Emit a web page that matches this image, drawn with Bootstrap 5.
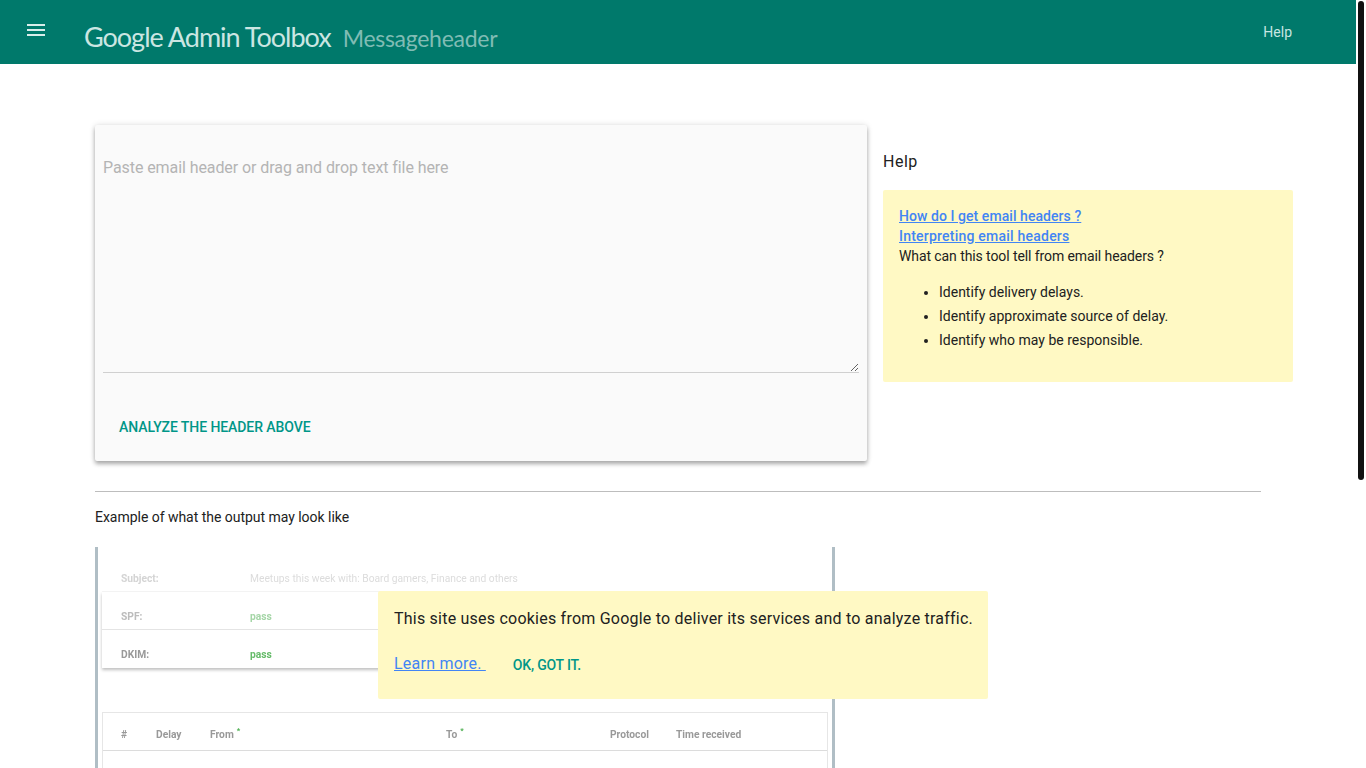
<!DOCTYPE html>
<html lang="en">
<head>
<meta charset="utf-8">
<title>Messageheader</title>
<link rel="stylesheet" href="https://cdn.jsdelivr.net/npm/bootstrap@5.3.0/dist/css/bootstrap.min.css">
<style>
body{font-family:Roboto,"Liberation Sans",sans-serif;font-size:14px;line-height:20px;color:#212121;background:#fff;width:1356px;overflow-x:hidden}
.scroll-thumb{position:fixed;left:1358px;top:1px;width:6px;height:479px;background:#111;border-radius:3px}
.top-bar{height:64px;background:#00796b;color:#b2dfdb}
.menu-btn{width:18px;margin-left:27px;margin-top:24px;align-self:flex-start}
.brand-main{font-family:Lato,sans-serif;font-weight:400;font-size:27px;line-height:32px;letter-spacing:-1px;color:#cbe6e2;margin-left:39px;margin-top:21px}
.brand-sub{font-family:Lato,sans-serif;font-weight:400;font-size:23px;line-height:32px;letter-spacing:-.28px;color:#80bcb4;margin-left:12px;margin-top:22px}
.top-help{color:#c8e6e2;margin-right:64px;margin-top:22px}
.page-wrap{padding:61px 63px 0 95px}
.paste-card{width:772px;height:336px;background:#fafafa;box-shadow:0 3px 4px rgba(0,0,0,.3),0 0 6px rgba(0,0,0,.12);padding:0 8px;border-radius:2px}
.paste-area{width:100%;height:248px;background:transparent;border:0;border-bottom:1px solid #d0d0d0;padding:32px 0 0;font-size:16px;line-height:21px;outline:0;display:block;font-family:inherit;letter-spacing:-.08px}
.paste-area::placeholder{color:#b4b4b4;opacity:1}
.analyze{color:#009688;font-weight:500;text-transform:uppercase;font-size:14px;margin-top:44px;margin-left:16px;line-height:20px;border:0;background:none;display:block;padding:0;letter-spacing:-.08px}
.help-col{width:410px}
.help-title{font-size:16px;letter-spacing:.5px;line-height:24px;margin-top:25px;margin-bottom:16px}
.tip-box{background:#fff9c4;border-radius:2px;height:192px;padding:16px;letter-spacing:-.09px}
.tip-box a{color:#4285f4;font-weight:500;display:block;letter-spacing:.06px}
.tip-box a+a{letter-spacing:.22px}
.tip-box ul{margin:14px 0 0;padding-left:40px;letter-spacing:0}
.tip-box li{line-height:24px}
.rule{border:0;border-top:1px solid #bdbdbd;opacity:1;margin:30px 32px 0 0}
.example-label{margin:15px 0 20px;letter-spacing:-.03px}
.shot{width:740px;height:660px;border-left:3px solid #b0bec5;border-right:3px solid #b0bec5;padding:7px 4px 0;font-size:10.25px;font-weight:700;color:#757575}
.shot-inner{filter:blur(.4px)}
.info-row{height:38px;padding-left:19px;padding-top:12px;border-bottom:1px solid #e4e4e4}
.info-key{width:129px}
.info-stack{box-shadow:0 2px 3px rgba(0,0,0,.25)}
.fade-a{color:#dcdcdc;font-weight:400;border-bottom-color:#f6f6f6}
.fade-a .info-key{font-weight:700;color:#d4d4d4}
.fade-b{color:#bcbcbc}
.fade-b .pass{color:#a5d6a7}
.fade-c{color:#999;border-bottom:0}
.fade-c .pass{color:#66bb6a}
.flow-table{margin-top:44px;border:1px solid #e6e6e6;height:400px}
.flow-head{height:38px;padding-top:6px;border-bottom:1px solid #dcdcdc;color:#999}
.c1{width:35px;margin-left:18px}.c2{width:54px}.c3{width:236px}.c4{width:164px}.c5{width:66px}
.flow-head sup{color:#4caf50;margin-left:3px;top:-.6em}
.cookie-note{position:fixed;left:378px;top:591px;width:610px;height:108px;background:#fff9c4;border-radius:2px;padding:16px;font-size:16px;line-height:24px;color:#212121;letter-spacing:.225px;white-space:nowrap}
.cookie-note a{color:#4285f4}
.cookie-row{margin-top:21px}
.cookie-ok{color:#009688;font-weight:500;font-size:14px;text-transform:uppercase;margin-left:27px;letter-spacing:-.2px;vertical-align:-1px}
</style>
</head>
<body>
<header class="top-bar d-flex">
  <svg class="menu-btn" viewBox="0 0 18 12" height="12" aria-hidden="true"><path fill="#d9eeeb" d="M0 0h18v2H0zM0 5h18v2H0zM0 10h18v2H0z"/></svg>
  <div class="brand-main">Google Admin Toolbox</div>
  <div class="brand-sub">Messageheader</div>
  <div class="top-help ms-auto">Help</div>
</header>
<main class="page-wrap">
  <div class="d-flex gap-3">
    <div class="paste-card">
      <textarea class="paste-area" placeholder="Paste email header or drag and drop text file here"></textarea>
      <button class="analyze" type="button">Analyze the header above</button>
    </div>
    <div class="help-col">
      <div class="help-title">Help</div>
      <div class="tip-box">
        <a href="#">How do I get email headers ?</a>
        <a href="#">Interpreting email headers</a>
        What can this tool tell from email headers ?
        <ul>
          <li>Identify delivery delays.</li>
          <li>Identify approximate source of delay.</li>
          <li>Identify who may be responsible.</li>
        </ul>
      </div>
    </div>
  </div>
  <hr class="rule">
  <div class="example-label">Example of what the output may look like</div>
  <div class="shot">
    <div class="shot-inner">
    <div class="info-row fade-a d-flex align-items-center"><div class="info-key">Subject:</div><div>Meetups this week with: Board gamers, Finance and others</div></div>
    <div class="info-stack">
      <div class="info-row fade-b d-flex align-items-center"><div class="info-key">SPF:</div><div class="pass">pass</div></div>
      <div class="info-row fade-c d-flex align-items-center"><div class="info-key">DKIM:</div><div class="pass">pass</div></div>
    </div>
    <div class="flow-table">
      <div class="flow-head d-flex align-items-center">
        <div class="c1">#</div><div class="c2">Delay</div><div class="c3">From<sup>*</sup></div><div class="c4">To<sup>*</sup></div><div class="c5">Protocol</div><div>Time received</div>
      </div>
    </div>
    </div>
  </div>
</main>
<div class="cookie-note">
  <div>This site uses cookies from Google to deliver its services and to analyze traffic.</div>
  <div class="cookie-row"><a href="#">Learn more. </a><span class="cookie-ok">OK, got it.</span></div>
</div>
<div class="scroll-thumb"></div>
<script src="https://cdn.jsdelivr.net/npm/bootstrap@5.3.0/dist/js/bootstrap.bundle.min.js"></script>
</body>
</html>
